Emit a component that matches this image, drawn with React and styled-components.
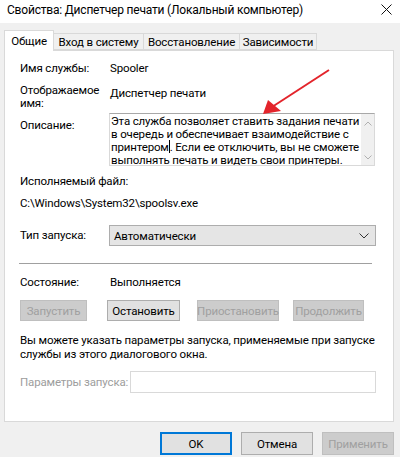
import React from "react";
import styled, { createGlobalStyle } from "styled-components";

const Global = createGlobalStyle`
  html, body { margin: 0; padding: 0; background: #f0f0f0; }
  body { font-family: Roboto, "Liberation Sans", sans-serif; font-size: 11.5px; letter-spacing: -0.15px; color: #000; }
  * { box-sizing: border-box; }
`;

const Window = styled.div`
  position: relative;
  width: 400px;
  height: 457px;
  overflow: hidden;
  background: #f0f0f0;
  display: flex;
  flex-direction: column;
`;

const TitleBar = styled.div`
  height: 23px;
  background: #fff;
  display: flex;
  align-items: center;
  justify-content: space-between;
  padding: 0 8px 4px 7px;
`;

const Title = styled.div`
  font-size: 12px;
  letter-spacing: -0.2px;
  color: #000;
  white-space: nowrap;
`;

const CloseBox = styled.div`
  width: 12px;
  height: 12px;
  display: flex;
  align-items: center;
  justify-content: center;
`;

const Tabs = styled.div`
  margin-top: 7px;
  height: 20px;
  padding-left: 4px;
  display: flex;
  align-items: flex-end;
  position: relative;
  z-index: 2;
`;

const Tab = styled.div`
  height: ${(p) => (p.$active ? "21px" : "17px")};
  margin-bottom: ${(p) => (p.$active ? "-1px" : "0")};
  width: ${(p) => p.$w}px;
  margin-left: ${(p) => (p.$first ? "0" : "-1px")};
  background: ${(p) => (p.$active ? "#fff" : "#f0f0f0")};
  border: 1px solid #d9d9d9;
  border-bottom: ${(p) => (p.$active ? "none" : "1px solid #d9d9d9")};
  display: flex;
  align-items: center;
  justify-content: center;
  padding-bottom: ${(p) => (p.$active ? "1px" : "0")};
  white-space: nowrap;
  z-index: ${(p) => (p.$active ? 2 : 1)};
`;

const Panel = styled.div`
  margin-left: 4px;
  width: 390px;
  height: 372px;
  background: #fff;
  border: 1px solid #d9d9d9;
  padding: 0 17px 0 15px;
  display: flex;
  flex-direction: column;
`;

const Row = styled.div`
  display: flex;
  align-items: ${(p) => p.$align || "center"};
  margin-top: ${(p) => p.$mt || 0}px;
`;

const Label = styled.div`
  width: ${(p) => p.$w || 90}px;
  flex: none;
  line-height: ${(p) => p.$lh || 15}px;
  padding-top: ${(p) => p.$pt || 0}px;
  color: ${(p) => (p.$disabled ? "#9d9d9d" : "#000")};
  white-space: nowrap;
`;

const Value = styled.div`
  line-height: 15px;
  padding-top: ${(p) => p.$pt || 0}px;
  white-space: nowrap;
`;

const Line = styled.div`
  line-height: ${(p) => p.$lh || 15}px;
  margin-top: ${(p) => p.$mt || 0}px;
  white-space: nowrap;
`;

const DescBox = styled.div`
  margin-left: -1px;
  width: 266px;
  height: 53px;
  border: 1px solid #d9d9d9;
  border-top-color: #a8a8a8;
  display: flex;
  background: #fff;
`;

const DescText = styled.div`
  flex: 1;
  padding: 1px 0 0 1px;
  line-height: 12.5px;
  white-space: nowrap;
  overflow: hidden;
`;

const Caret = styled.span`
  display: inline-block;
  width: 1px;
  height: 13px;
  background: #000;
  vertical-align: -2px;
`;

const ScrollBar = styled.div`
  width: 13px;
  flex: none;
  background: #f0f0f0;
  display: flex;
  flex-direction: column;
  justify-content: space-between;
  align-items: center;
  padding: 7px 0 5px;
`;

const Combo = styled.div`
  margin-left: -1px;
  width: 267px;
  height: 21px;
  background: #e5e5e5;
  border: 1px solid #adadad;
  display: flex;
  align-items: center;
  justify-content: space-between;
  padding: 0 6px 0 4px;
`;

const Separator = styled.div`
  margin-top: 17px;
  margin-left: -1px;
  width: 353px;
  height: 1px;
  background: #a0a0a0;
`;

const Btn = styled.div`
  width: ${(p) => p.$w}px;
  height: ${(p) => p.$h || 21}px;
  margin-left: ${(p) => p.$ml || 0}px;
  flex: none;
  display: flex;
  align-items: center;
  justify-content: center;
  background: ${(p) => (p.$disabled ? "#cccccc" : "#e1e1e1")};
  border: ${(p) =>
    p.$default ? "2px solid #0078d7" : p.$disabled ? "1px solid #bfbfbf" : "1px solid #adadad"};
  color: ${(p) => (p.$disabled ? "#a0a0a0" : "#000")};
  white-space: nowrap;
`;

const Input = styled.div`
  width: 246px;
  height: 22px;
  border: 1px solid #d9d9d9;
  background: #fff;
`;

const Footer = styled.div`
  margin-top: 10px;
  display: flex;
  justify-content: flex-end;
  gap: 9px;
  padding-right: 6px;
`;

const ArrowSvg = styled.svg`
  position: absolute;
  left: 0;
  top: 0;
  pointer-events: none;
  z-index: 5;
`;

const Chevron = ({ up }) => (
  <svg width="8" height="5" viewBox="0 0 8 5">
    <path
      d={up ? "M0.5 4.5 L4 1 L7.5 4.5" : "M0.5 0.5 L4 4 L7.5 0.5"}
      fill="none"
      stroke="#b0b0b0"
      strokeWidth="1"
    />
  </svg>
);

export default function App() {
  return (
    <>
      <Global />
      <Window>
        <TitleBar>
          <Title>Свойства: Диспетчер печати (Локальный компьютер)</Title>
          <CloseBox>
            <svg width="11" height="11" viewBox="0 0 11 11">
              <path d="M0.5 0.5 L10.5 10.5 M10.5 0.5 L0.5 10.5" stroke="#111" strokeWidth="1" />
            </svg>
          </CloseBox>
        </TitleBar>
        <Tabs>
          <Tab $active $first $w={50}>Общие</Tab>
          <Tab $w={91}>Вход в систему</Tab>
          <Tab $w={97}>Восстановление</Tab>
          <Tab $w={78}>Зависимости</Tab>
        </Tabs>
        <Panel>
          <Row $mt={10}>
            <Label>Имя службы:</Label>
            <Value>Spooler</Value>
          </Row>
          <Row $mt={8} $align="flex-start">
            <Label $lh={13}>
              Отображаемое
              <br />
              имя:
            </Label>
            <Value $pt={2}>Диспетчер печати</Value>
          </Row>
          <Row $mt={3} $align="flex-start">
            <Label $pt={5}>Описание:</Label>
            <DescBox>
              <DescText>
                Эта служба позволяет ставить задания печати
                <br />в очередь и обеспечивает взаимодействие с
                <br />
                принтером
                <Caret />. Если ее отключить, вы не сможете
                <br />
                выполнять печать и видеть свои принтеры.
              </DescText>
              <ScrollBar>
                <Chevron up />
                <Chevron />
              </ScrollBar>
            </DescBox>
          </Row>
          <Line $mt={8}>Исполняемый файл:</Line>
          <Line $mt={7}>C:\Windows\System32\spoolsv.exe</Line>
          <Row $mt={14}>
            <Label>Тип запуска:</Label>
            <Combo>
              <span>Автоматически</span>
              <svg width="10" height="6" viewBox="0 0 10 6">
                <path d="M0.5 0.5 L5 5 L9.5 0.5" fill="none" stroke="#333" strokeWidth="1" />
              </svg>
            </Combo>
          </Row>
          <Separator />
          <Row $mt={11}>
            <Label>Состояние:</Label>
            <Value>Выполняется</Value>
          </Row>
          <Row $mt={10}>
            <Btn $w={67} $disabled>Запустить</Btn>
            <Btn $w={73} $ml={20}>Остановить</Btn>
            <Btn $w={82} $ml={17} $disabled>Приостановить</Btn>
            <Btn $w={71} $ml={14} $disabled>Продолжить</Btn>
          </Row>
          <Line $mt={12} $lh={14}>
            Вы можете указать параметры запуска, применяемые при запуске
          </Line>
          <Line $lh={14}>службы из этого диалогового окна.</Line>
          <Row $mt={10}>
            <Label $w={110} $disabled>Параметры запуска:</Label>
            <Input />
          </Row>
        </Panel>
        <Footer>
          <Btn $w={72} $h={23} $default>OK</Btn>
          <Btn $w={72} $h={23}>Отмена</Btn>
          <Btn $w={72} $h={23} $disabled>Применить</Btn>
        </Footer>
        <ArrowSvg width="400" height="457" viewBox="0 0 400 457">
          <line x1="329" y1="70" x2="272" y2="107" stroke="#e3242b" strokeWidth="2" />
          <polygon points="263,114 268,100 281,111" fill="#e3242b" />
        </ArrowSvg>
      </Window>
    </>
  );
}
